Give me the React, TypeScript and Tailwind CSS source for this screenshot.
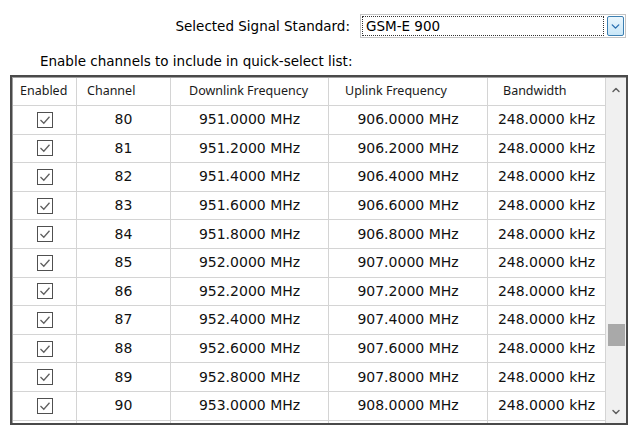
import { ChevronDown, ChevronUp } from "lucide-react";

const ROWS = Array.from({ length: 11 }, (_, i) => {
  const ch = 80 + i;
  const dl = (951 + i * 0.2).toFixed(4);
  const ul = (906 + i * 0.2).toFixed(4);
  return { ch, dl: `${dl} MHz`, ul: `${ul} MHz`, bw: "248.0000 kHz" };
});

// header labels sit left-ish in their columns, each with its own inset
const HEADERS = [
  { label: "Enabled", pad: "pl-[7px]" },
  { label: "Channel", pad: "pl-[10px]" },
  { label: "Downlink Frequency", pad: "pl-[18px]" },
  { label: "Uplink Frequency", pad: "pl-[16px]" },
  { label: "Bandwidth", pad: "pl-[15px]" },
];

function CheckBox() {
  return (
    <svg width="16" height="16" viewBox="0 0 16 16">
      <rect x="0.5" y="0.5" width="15" height="15" fill="white" stroke="#505050" />
      <polyline points="3.5,8 6.8,11.2 12.5,4.8" fill="none" stroke="#606060" strokeWidth="1.3" />
    </svg>
  );
}

function Cell({ children }: { children?: React.ReactNode }) {
  return (
    <div className="h-[28.6px] flex items-center justify-center border-r border-b border-[#d4d4d4] text-[14px] text-[#111]">
      {children}
    </div>
  );
}

function Dropdown() {
  return (
    <div className="w-[266px] h-[24px] border border-[#c4c4c4] bg-white flex items-center p-[1px]">
      <div className="flex-1 h-full border border-dotted border-[#333] flex items-center pl-[3px] text-[13.5px]">
        GSM-E 900
      </div>
      <div className="ml-[3px] w-[17px] h-[20px] rounded-[2px] border border-[#3c7fb1] bg-gradient-to-b from-[#eaf6fd] to-[#c9e7f8] flex items-center justify-center">
        <ChevronDown size={13} strokeWidth={2.6} className="text-[#2a6fb0]" />
      </div>
    </div>
  );
}

function ScrollBar() {
  return (
    <div className="w-[21px] bg-[#f0f0f0] flex flex-col items-center">
      <div className="h-[24px] flex items-center justify-center">
        <ChevronUp size={12} strokeWidth={3} className="text-[#606060]" />
      </div>
      <div className="mt-[222px] w-[17px] h-[22px] bg-[#a9a9a9]" />
      <div className="mt-[56px] h-[20px] flex items-center justify-center">
        <ChevronDown size={12} strokeWidth={3} className="text-[#606060]" />
      </div>
    </div>
  );
}

export default function App() {
  return (
    <div
      className="w-[635px] h-[430px] bg-white overflow-hidden text-black"
      style={{ fontFamily: '"DejaVu Sans", sans-serif' }}
    >
      <div className="pt-[14px] flex items-center">
        <div className="w-[351px] text-right text-[13.5px] pr-[1px]">Selected Signal Standard:</div>
        <div className="ml-[9px]">
          <Dropdown />
        </div>
      </div>

      <div className="mt-[13px] h-[20px] pl-[40px] flex items-center text-[13.5px]">
        Enable channels to include in quick-select list:
      </div>

      <div className="mt-[4px] ml-[10px] w-[618px] h-[350px] border-2 border-[#4a4a4a] bg-[#f0f0f0]">
        <div className="h-full border border-[#a0a0a0] border-r-0 border-b-0 flex overflow-hidden bg-white">
          <div className="w-[594px]">
            <div className="grid grid-cols-[64px_94px_158px_159px_118px]">
              {HEADERS.map((h) => (
                <div
                  key={h.label}
                  className={`h-[28px] flex items-center border-r border-b border-[#d4d4d4] text-[12.5px] text-[#1a1a1a] ${h.pad}`}
                  style={{ fontFamily: '"Noto Sans", sans-serif' }}
                >
                  {h.label}
                </div>
              ))}
              {ROWS.map((r) => (
                <div key={r.ch} className="contents">
                  <Cell>
                    <CheckBox />
                  </Cell>
                  <Cell>{r.ch}</Cell>
                  <Cell>{r.dl}</Cell>
                  <Cell>{r.ul}</Cell>
                  <Cell>{r.bw}</Cell>
                </div>
              ))}
              <Cell />
              <Cell />
              <Cell />
              <Cell />
              <Cell />
            </div>
          </div>
          <ScrollBar />
        </div>
      </div>
    </div>
  );
}
